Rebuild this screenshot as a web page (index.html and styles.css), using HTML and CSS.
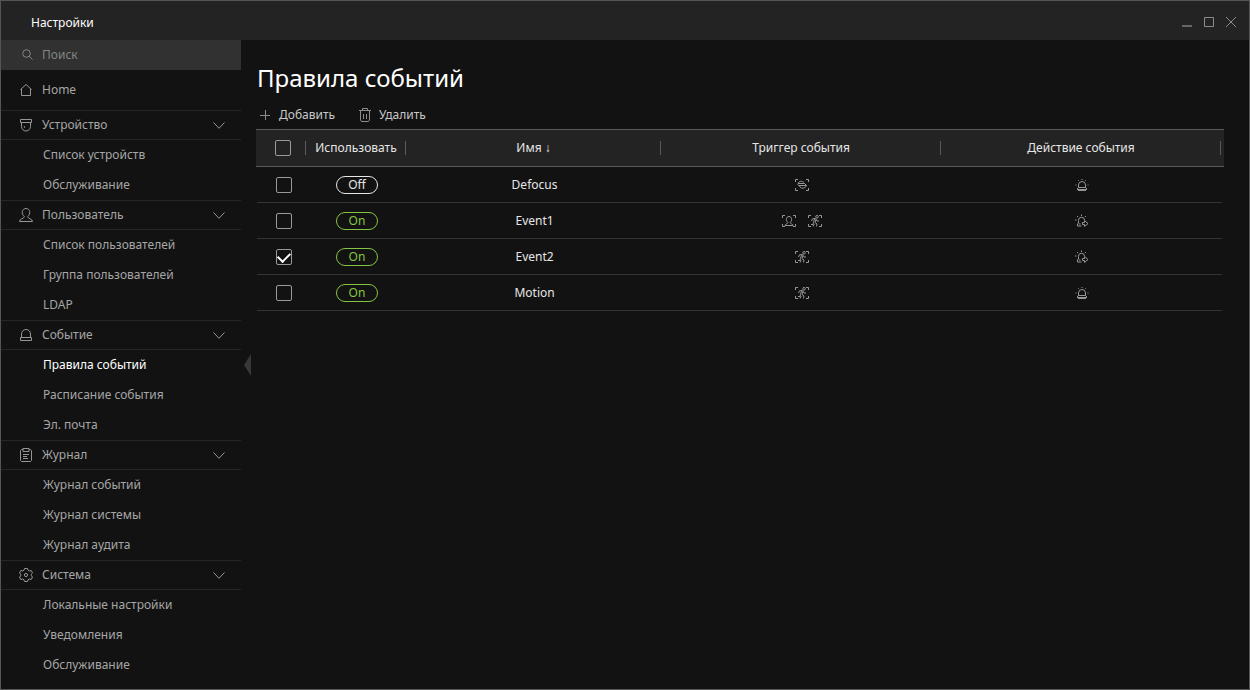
FILE: index.html
```html
<!DOCTYPE html>
<html lang="ru">
<head>
<meta charset="utf-8">
<title>Настройки</title>
<link rel="stylesheet" href="styles.css">
</head>
<body>
<svg class="sprite" aria-hidden="true">
  <symbol id="chevron" viewBox="0 0 14 10"><path d="M1.500 2.500 L7 8.300 L12.500 2.500"/></symbol>
  <symbol id="brackets" viewBox="0 0 16 14"><path d="M1.500 4V1.500H4M12 1.500H14.500V4M14.500 10V12.500H12M4 12.500H1.500V10"/></symbol>
  <symbol id="defocus" viewBox="0 0 16 14"><use href="#brackets"/><path d="M4 5.500C5 3 8 2.500 10 4.500M4 5.500H10.500L12.500 7.500M3.500 6.500L5 7.500H12.500M5.500 8C6.500 11 11 11 12.500 7.500"/></symbol>
  <symbol id="face" viewBox="0 0 16 14"><use href="#brackets"/><path d="M4 11.500C4 9.800 6.800 10 6.800 8.500C4.500 6.500 5 2.500 8 2.500S11.500 6.500 9.200 8.500C9.200 10 12 9.800 12 11.500Z"/></symbol>
  <symbol id="motion" viewBox="0 0 16 14"><use href="#brackets"/><circle cx="10" cy="2.800" r="1.300"/><path d="M4.500 7L5.500 4.800L8.500 4.500L10 7L12 7M7.500 5L6.500 8.500M9 5.500L8 8.500L10 10L9.500 12.500M6.500 8.500L6 10.500L4 10.500M7.200 10L6 12.500"/></symbol>
  <symbol id="alarm" viewBox="0 0 14 14"><path d="M3.500 9.500V7A3.500 3.500 0 0 1 10.500 7V9.500M3 9.500H11M2.500 10V12M11.500 10V12M3 11.500H11M3 12.500H11M7 1V2M3 2L3.700 2.700M11 2L10.300 2.700M.5 7H1.500M12.500 7H13.500"/></symbol>
  <symbol id="alarm-out" viewBox="0 0 14 14"><path d="M3.500 9V6.500A3 3 0 0 1 9.500 6M3.500 9L2.500 10V12H6.500M6.500.5V2M2 2L3 3M11 2L10 3M0 6H1.500M4 10H5.500M7.500 8.500H9.500V6.500L13 9.500L9.500 12.500V10.500H7.500Z"/></symbol>
</svg>
<div class="window">
  <header class="titlebar">
    <span class="titlebar-text">Настройки</span>
    <div class="window-buttons">
      <button type="button" aria-label="Свернуть"><svg class="icon minimize" viewBox="0 0 12 12"><path d="M1 9H11"/></svg></button>
      <button type="button" aria-label="Развернуть"><svg class="icon" viewBox="0 0 12 12"><path d="M1.500 .5H10.500V9.500H1.500Z"/></svg></button>
      <button type="button" aria-label="Закрыть"><svg class="icon" viewBox="0 0 12 12"><path d="M1 0L11 10M11 0L1 10"/></svg></button>
    </div>
  </header>
  <div class="content">
    <nav class="sidebar">
      <label class="search">
        <svg class="icon nav-icon" viewBox="0 0 14 14"><circle cx="7.500" cy="5.500" r="3.800"/><path d="M10.200 8.200L13.500 11.500"/></svg>
        <input type="search" placeholder="Поиск" aria-label="Поиск">
      </label>
      <a class="home" href="#"><svg class="icon nav-icon" viewBox="0 0 14 14"><path d="M1.500 6.500L7 1.500L12.500 6.500M2.500 6V12.500H11.500V6"/></svg>Home</a>

      <button type="button" class="group" aria-expanded="true"><svg class="icon nav-icon" viewBox="0 0 14 14"><path d="M1.500 1.500H12.500V4.500H1.500ZM2.500 4.500V8.500A4.500 4.500 0 0 0 11.500 8.500V4.500"/><circle cx="5.500" cy="9" r=".4"/></svg>Устройство<svg class="icon chevron"><use href="#chevron"/></svg></button>
      <ul><li><a href="#">Список устройств</a></li><li><a href="#">Обслуживание</a></li></ul>

      <button type="button" class="group" aria-expanded="true"><svg class="icon nav-icon" viewBox="0 0 14 14"><path d="M.5 13.500C.5 10.500 5.300 11 5.300 8.500C2.200 6 2.500 .5 7 .5S11.800 6 8.700 8.500C8.700 11 13.500 10.500 13.500 13.500Z"/></svg>Пользователь<svg class="icon chevron"><use href="#chevron"/></svg></button>
      <ul><li><a href="#">Список пользователей</a></li><li><a href="#">Группа пользователей</a></li><li><a href="#">LDAP</a></li></ul>

      <button type="button" class="group" aria-expanded="true"><svg class="icon nav-icon" viewBox="0 0 14 14"><path d="M2.500 9.500V6A4.500 4.500 0 0 1 11.500 6V9.500M1.500 9.500H12.500V12.500H1.500Z"/></svg>Событие<svg class="icon chevron"><use href="#chevron"/></svg></button>
      <ul><li><a class="current" href="#" aria-current="page">Правила событий</a></li><li><a href="#">Расписание события</a></li><li><a href="#">Эл. почта</a></li></ul>

      <button type="button" class="group" aria-expanded="true"><svg class="icon nav-icon" viewBox="0 0 14 14"><path d="M4 1.500H2.500L1.500 2.500V12.500L2.500 13.500H11.500L12.500 12.500V2.500L11.500 1.500H10M4 .5H10V3.500H4ZM4 6.500H10M4 8.500H8M4 10.500H9"/></svg>Журнал<svg class="icon chevron"><use href="#chevron"/></svg></button>
      <ul><li><a href="#">Журнал событий</a></li><li><a href="#">Журнал системы</a></li><li><a href="#">Журнал аудита</a></li></ul>

      <button type="button" class="group" aria-expanded="true"><svg class="icon nav-icon" viewBox="0 0 14 14"><path d="M5.500 .5H8.500L9 2.200L10.500 3L12.200 2.500L13.500 5L12.300 6.200V7.800L13.500 9L12.200 11.500L10.500 11L9 11.800L8.500 13.500H5.500L5 11.800L3.500 11L1.800 11.500L.5 9L1.700 7.800V6.200L.5 5L1.800 2.500L3.500 3L5 2.200Z"/><circle cx="7" cy="7" r="1.600"/></svg>Система<svg class="icon chevron"><use href="#chevron"/></svg></button>
      <ul><li><a href="#">Локальные настройки</a></li><li><a href="#">Уведомления</a></li><li><a href="#">Обслуживание</a></li></ul>
    </nav>

    <main class="main">
      <h1>Правила событий</h1>
      <div class="toolbar">
        <button type="button"><svg class="icon tool-icon" viewBox="0 0 14 14"><path d="M2 7.500H12M7.500 2V12"/></svg>Добавить</button>
        <button type="button"><svg class="icon tool-icon" viewBox="0 0 14 14"><path d="M1 2.500H13M4.500 2.500V.5H9.500V2.500M2.500 3V12L3.500 13.500H10.500L11.500 12V3M5.500 6V11M8.500 6V11"/></svg>Удалить</button>
      </div>
      <table>
        <colgroup><col class="col-check"><col class="col-use"><col class="col-name"><col class="col-trigger"><col></colgroup>
        <thead>
          <tr>
            <th scope="col" class="check"><input type="checkbox" aria-label="Выбрать все"></th>
            <th scope="col">Использовать</th>
            <th scope="col" aria-sort="descending">Имя ↓</th>
            <th scope="col">Триггер события</th>
            <th scope="col">Действие события</th>
          </tr>
        </thead>
        <tbody>
          <tr>
            <td class="check"><input type="checkbox" aria-label="Defocus"></td>
            <td><button type="button" class="pill" aria-pressed="false">Off</button></td>
            <td>Defocus</td>
            <td><div class="icons"><svg class="icon trigger"><use href="#defocus"/></svg></div></td>
            <td><div class="icons"><svg class="icon action"><use href="#alarm"/></svg></div></td>
          </tr>
          <tr>
            <td class="check"><input type="checkbox" aria-label="Event1"></td>
            <td><button type="button" class="pill" aria-pressed="true">On</button></td>
            <td>Event1</td>
            <td><div class="icons"><svg class="icon trigger"><use href="#face"/></svg><svg class="icon trigger"><use href="#motion"/></svg></div></td>
            <td><div class="icons"><svg class="icon action"><use href="#alarm-out"/></svg></div></td>
          </tr>
          <tr>
            <td class="check"><input type="checkbox" aria-label="Event2" checked></td>
            <td><button type="button" class="pill" aria-pressed="true">On</button></td>
            <td>Event2</td>
            <td><div class="icons"><svg class="icon trigger"><use href="#motion"/></svg></div></td>
            <td><div class="icons"><svg class="icon action"><use href="#alarm-out"/></svg></div></td>
          </tr>
          <tr>
            <td class="check"><input type="checkbox" aria-label="Motion"></td>
            <td><button type="button" class="pill" aria-pressed="true">On</button></td>
            <td>Motion</td>
            <td><div class="icons"><svg class="icon trigger"><use href="#motion"/></svg></div></td>
            <td><div class="icons"><svg class="icon action"><use href="#alarm"/></svg></div></td>
          </tr>
        </tbody>
      </table>
    </main>
  </div>
</div>
</body>
</html>
```
FILE: styles.css
```css
* {
  box-sizing: border-box;
}

body {
  margin: 0;
  background: #121212;
  color: #e6e6e6;
  font: 12px/20px "Noto Sans", "Open Sans", sans-serif;
}

button,
input {
  margin: 0;
  padding: 0;
  border: 0;
  background: none;
  color: inherit;
  font: inherit;
}

a {
  color: inherit;
  text-decoration: none;
}

.sprite {
  position: absolute;
  width: 0;
  height: 0;
}

.icon {
  display: block;
  flex: none;
  fill: none;
  stroke: #969696;
  stroke-width: 1;
}

.window {
  display: flex;
  flex-direction: column;
  min-height: 100vh;
  border: 1px solid #555;
}

/* Title bar */
.titlebar {
  display: flex;
  justify-content: space-between;
  align-items: center;
  height: 39px;
  padding: 4px 12px 0 30px;
  background: #232323;
  color: #fff;
}

.window-buttons {
  display: flex;
  gap: 10px;
}

.window-buttons .icon {
  width: 12px;
  height: 12px;
  stroke: #8c8c8c;
}

.window-buttons .minimize {
  stroke: #666;
  stroke-width: 2;
}

.content {
  display: flex;
  flex: 1;
}

/* Sidebar */
.sidebar {
  flex: none;
  width: 240px;
  color: #a6a6a6;
}

.search,
.home,
.group {
  display: flex;
  align-items: center;
  gap: 9px;
  width: 100%;
  padding: 0 15px 0 18px;
  text-align: left;
}

.search {
  height: 30px;
  background: #313131;
}

.search input {
  flex: 1;
  min-width: 0;
  outline: 0;
}

.search input::placeholder {
  color: #858585;
  opacity: 1;
}

.home {
  height: 40px;
}

.group {
  height: 30px;
  border-top: 1px solid #262626;
  border-bottom: 1px solid #262626;
}

.nav-icon {
  width: 14px;
  height: 14px;
}

.search .nav-icon {
  stroke: #858585;
}

.chevron {
  width: 14px;
  height: 10px;
  margin-left: auto;
}

.sidebar ul {
  margin: 0;
  padding: 0;
  list-style: none;
}

.sidebar li a {
  display: block;
  padding: 5px 0 5px 42px;
}

.sidebar li .current {
  position: relative;
  color: #fff;
}

.current::after {
  content: "";
  position: absolute;
  top: 4px;
  right: -10px;
  border: solid transparent;
  border-width: 11px 7px 11px 0;
  border-right-color: #383838;
}

/* Main area */
.main {
  flex: 1;
  min-width: 0;
  padding: 22px 25px 22px 15px;
}

h1 {
  margin: 0;
  padding-left: 1px;
  color: #fff;
  font-size: 24px;
  font-weight: 400;
  line-height: 32px;
}

.toolbar {
  display: flex;
  gap: 23px;
  padding: 11px 0 4px 2px;
  color: #c8c8c8;
}

.toolbar button {
  display: flex;
  align-items: center;
  gap: 7px;
}

.tool-icon {
  width: 14px;
  height: 14px;
  stroke: #8c8c8c;
}

/* Rules table */
table {
  width: 100%;
  border-spacing: 0;
  table-layout: fixed;
}

.col-check {
  width: 50px;
}

.col-use {
  width: 100px;
}

.col-name {
  width: 26.35%;
}

.col-trigger {
  width: 28.93%;
}

th,
td {
  height: 36px;
  padding: 0;
  font-weight: 400;
  text-align: center;
}

td {
  padding-left: 2px;
}

th:last-child,
td:last-child {
  padding-right: 3px;
}

th {
  height: 38px;
  border-top: 1px solid #5a5a5a;
  border-bottom: 1px solid #5a5a5a;
  background: linear-gradient(#5a5a5a, #5a5a5a) no-repeat right 50% / 1px 14px #232323;
}

th:last-child {
  background-position: right 3px top 50%;
}

tbody tr {
  background: linear-gradient(#333, #333) no-repeat 1px 100% / calc(100% - 3px) 1px;
}

.check {
  padding-left: 6px;
}

th.check {
  padding-left: 4px;
}

.check input {
  display: block;
  width: 16px;
  height: 16px;
  margin: 0 auto;
  appearance: none;
  border: 1px solid #9a9a9a;
  border-radius: 2px;
}

.check input:checked::after {
  content: "";
  display: block;
  width: 10px;
  height: 6px;
  margin: 2px auto 0;
  border: solid #fff;
  border-width: 0 0 2px 2px;
  transform: rotate(-45deg);
}

.pill {
  display: block;
  width: 42px;
  height: 18px;
  margin: 0 auto;
  border: 1px solid #e6e6e6;
  border-radius: 9px;
  line-height: 16px;
}

.pill[aria-pressed="true"] {
  border-color: #85c440;
  color: #85c440;
}

.icons {
  display: flex;
  justify-content: center;
  gap: 10px;
}

.trigger {
  width: 16px;
  height: 14px;
}

.action {
  width: 14px;
  height: 14px;
}
```
